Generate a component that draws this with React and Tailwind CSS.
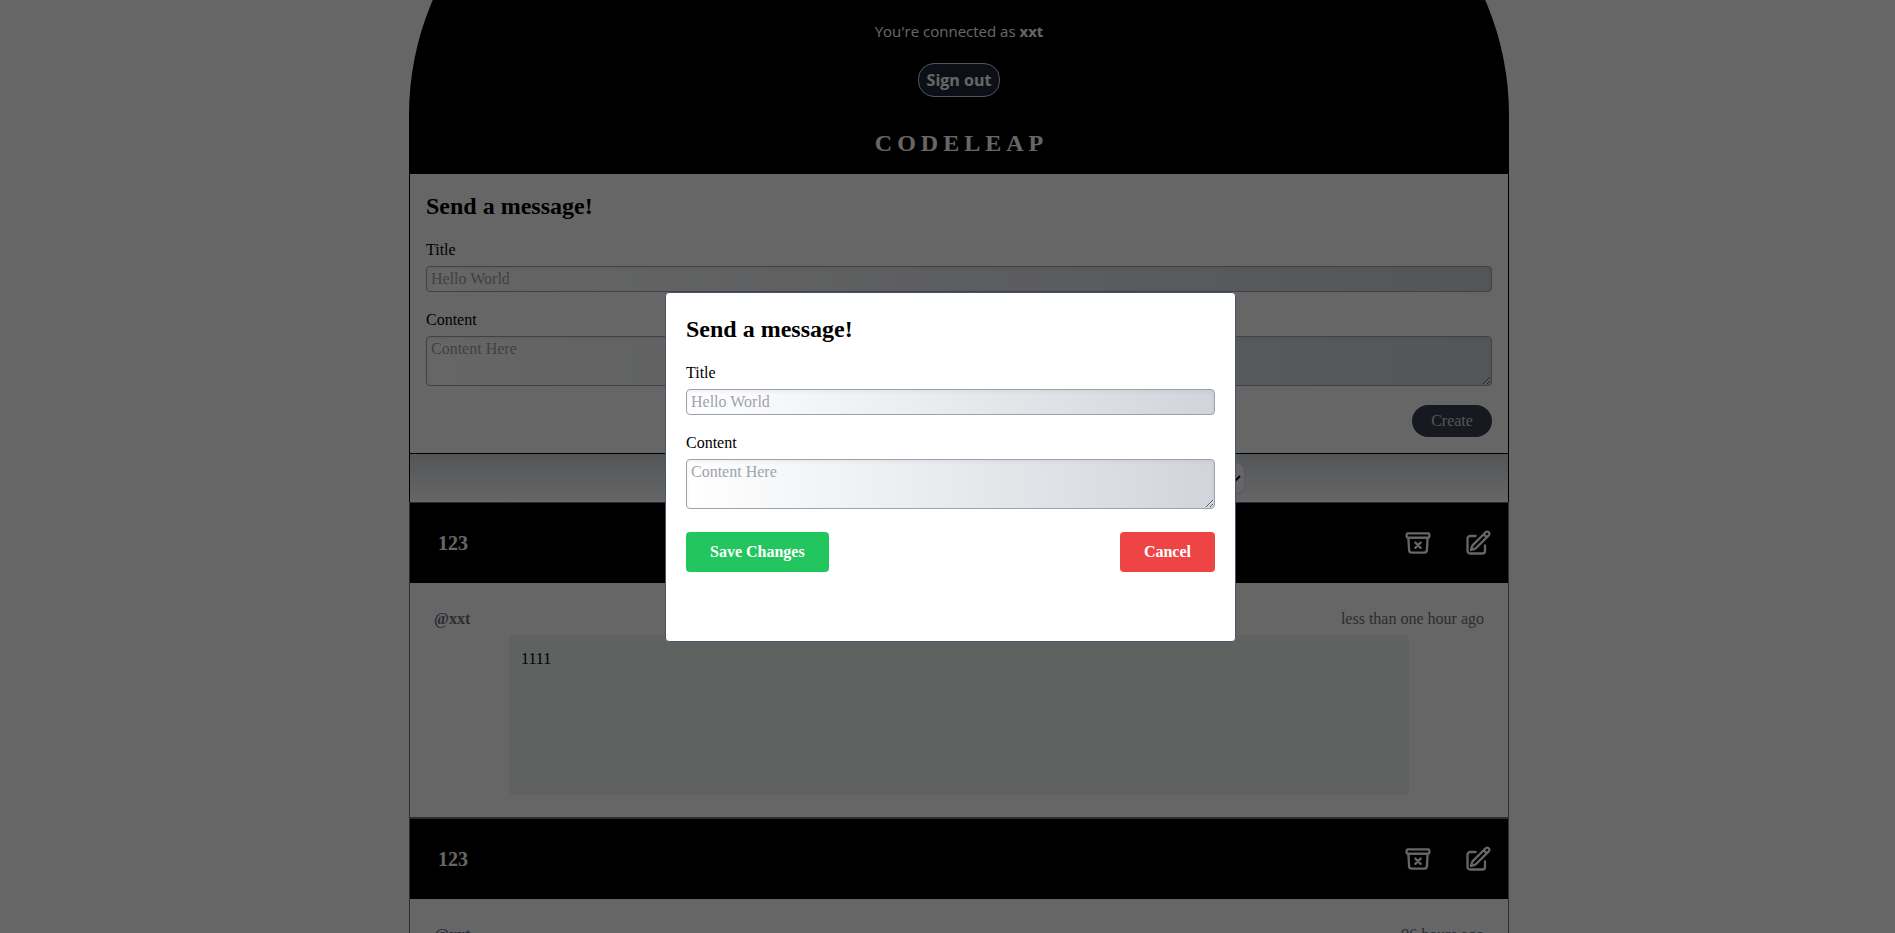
import { HiOutlineArchiveBoxXMark, HiOutlinePencilSquare } from "react-icons/hi2";

const posts = [
  { id: 1, title: "123", author: "@xxt", age: "less than one hour ago", content: "1111" },
  { id: 2, title: "123", author: "@xxt", age: "96 hours ago", content: "1111" },
];

const fieldClass =
  "mt-1 block w-full rounded border border-[#9ca3af] bg-linear-to-r from-white to-[#d1d5db] px-1 leading-6 text-black inset-shadow-sm placeholder:text-[#9ca3af]";

function MessageFields({ prefix }) {
  return (
    <>
      <h2 className="text-2xl font-bold">Send a message!</h2>
      <div className="mt-4">
        <label htmlFor={`${prefix}-title`} className="block">
          Title
        </label>
        <input id={`${prefix}-title`} type="text" placeholder="Hello World" className={fieldClass} />
      </div>
      <div className="mt-4">
        <label htmlFor={`${prefix}-content`} className="block">
          Content
        </label>
        <textarea id={`${prefix}-content`} rows={2} placeholder="Content Here" className={fieldClass} />
      </div>
    </>
  );
}

function Header() {
  return (
    <header className="-mt-[175px] flex flex-col items-center rounded-t-[290px] bg-black pt-[194px] pb-[14px] text-white">
      <p className="font-['Open_Sans',sans-serif] text-[15px] leading-6">
        You're connected as <strong>xxt</strong>
      </p>
      <button
        type="button"
        className="mt-5 rounded-2xl border border-gray-300 bg-[#1f2937] px-2 py-1 font-['Open_Sans',sans-serif] leading-6 font-bold"
      >
        Sign out
      </button>
      <h1 className="mt-[30px] pl-[5px] text-2xl font-bold tracking-[5px]">CODELEAP</h1>
    </header>
  );
}

function Post({ post }) {
  return (
    <article className="border border-[#6b7280]">
      <div className="flex h-20 items-center justify-between bg-black pr-4 pl-7 text-white">
        <h2 className="text-xl font-bold">{post.title}</h2>
        <div className="flex gap-8">
          <button type="button" aria-label="Delete post">
            <HiOutlineArchiveBoxXMark className="size-7" strokeWidth={2} />
          </button>
          <button type="button" aria-label="Edit post">
            <HiOutlinePencilSquare className="size-7" strokeWidth={2} />
          </button>
        </div>
      </div>
      <div className="px-6 pt-6 pb-[22px]">
        <div className="flex justify-between text-[#6b7280]">
          <strong>{post.author}</strong>
          <span>{post.age}</span>
        </div>
        <p className="mx-auto mt-1 h-40 w-[900px] max-w-full rounded bg-[#f1f6f4] p-3">{post.content}</p>
      </div>
    </article>
  );
}

function EditDialog() {
  return (
    <div className="fixed inset-0 flex items-center justify-center bg-black/60 pl-[6px]">
      <div
        role="dialog"
        aria-modal="true"
        aria-label="Send a message!"
        className="w-[571px] max-w-full rounded border border-[#475569] bg-white px-5 pt-5 pb-[69px]"
      >
        <MessageFields prefix="edit" />
        <div className="mt-[23px] flex justify-between font-bold text-white">
          <button type="button" className="rounded bg-[#22c55e] px-6 py-2">
            Save Changes
          </button>
          <button type="button" className="rounded bg-[#ef4444] px-6 py-2">
            Cancel
          </button>
        </div>
      </div>
    </div>
  );
}

export default function App() {
  return (
    <div className="h-screen overflow-hidden bg-white pl-[23px] font-['Liberation_Serif',serif] text-base text-black">
      <main className="mx-auto max-w-[1100px]">
        <Header />
        <form className="border border-black p-4">
          <MessageFields prefix="new" />
          <div className="mt-[19px] flex justify-end">
            <button type="button" className="w-20 rounded-2xl bg-[#374151] py-1 text-[#d1d5db]">
              Create
            </button>
          </div>
        </form>
        <div className="border-x border-black bg-linear-to-b from-[#d1d5db] to-white py-[9px]">
          <div className="mx-auto flex w-[570px] max-w-full justify-end">
            <select aria-label="Sort posts" className="h-[30px] w-40 rounded-lg bg-white px-1 shadow">
              <option>Newest first</option>
              <option>Oldest first</option>
            </select>
          </div>
        </div>
        {posts.map((post) => (
          <Post key={post.id} post={post} />
        ))}
      </main>
      <EditDialog />
    </div>
  );
}
